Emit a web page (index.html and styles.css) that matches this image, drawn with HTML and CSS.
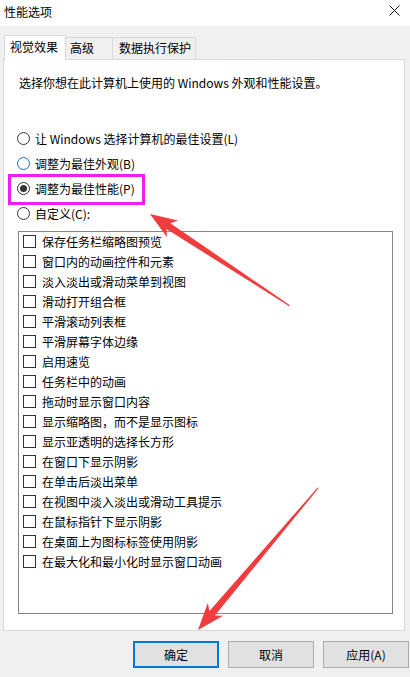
FILE: index.html
```html
<!DOCTYPE html>
<html lang="zh-CN">
<head>
  <meta charset="UTF-8" />
  <meta name="viewport" content="width=device-width, initial-scale=1.0" />
  <title>性能选项</title>
  <link rel="stylesheet" href="styles.css">
</head>
<body>
  <div class="dialog">
    <div class="titlebar">
      <span class="title">性能选项</span>
      <svg class="close" width="11" height="11" viewBox="0 0 11 11">
        <path d="M0.5 0.5 L10.5 10.5 M10.5 0.5 L0.5 10.5" stroke="#111" stroke-width="1" fill="none" />
      </svg>
    </div>

    <div class="tabs">
      <div class="tab active">视觉效果</div>
      <div class="tab tab-adv">高级</div>
      <div class="tab tab-dep">数据执行保护</div>
    </div>

    <div class="panel">
      <p class="desc">选择你想在此计算机上使用的 Windows 外观和性能设置。</p>

      <div class="radios">
        <div class="radio"><span class="circle"></span>让 Windows 选择计算机的最佳设置(L)</div>
        <div class="radio"><span class="circle focus"></span>调整为最佳外观(B)</div>
        <div class="radio"><span class="circle checked"></span>调整为最佳性能(P)</div>
        <div class="radio"><span class="circle"></span>自定义(C):</div>
      </div>

      <div class="listbox">
        <div class="item"><span class="box"></span>保存任务栏缩略图预览</div>
        <div class="item"><span class="box"></span>窗口内的动画控件和元素</div>
        <div class="item"><span class="box"></span>淡入淡出或滑动菜单到视图</div>
        <div class="item"><span class="box"></span>滑动打开组合框</div>
        <div class="item"><span class="box"></span>平滑滚动列表框</div>
        <div class="item"><span class="box"></span>平滑屏幕字体边缘</div>
        <div class="item"><span class="box"></span>启用速览</div>
        <div class="item"><span class="box"></span>任务栏中的动画</div>
        <div class="item"><span class="box"></span>拖动时显示窗口内容</div>
        <div class="item"><span class="box"></span>显示缩略图，而不是显示图标</div>
        <div class="item"><span class="box"></span>显示亚透明的选择长方形</div>
        <div class="item"><span class="box"></span>在窗口下显示阴影</div>
        <div class="item"><span class="box"></span>在单击后淡出菜单</div>
        <div class="item"><span class="box"></span>在视图中淡入淡出或滑动工具提示</div>
        <div class="item"><span class="box"></span>在鼠标指针下显示阴影</div>
        <div class="item"><span class="box"></span>在桌面上为图标标签使用阴影</div>
        <div class="item"><span class="box"></span>在最大化和最小化时显示窗口动画</div>
      </div>
    </div>

    <div class="buttons">
      <button class="btn default">确定</button>
      <button class="btn">取消</button>
      <button class="btn">应用(A)</button>
    </div>

    <!-- tutorial markup drawn over the dialog -->
    <svg class="overlay" width="410" height="677" viewBox="0 0 410 677">
      <rect x="9.5" y="175.5" width="134" height="28" fill="none" stroke="#f01ef0" stroke-width="3" />
      <g transform="translate(150,214) rotate(33.3)">
        <path d="M0 0 L27 -10 L22 -3.5 L167 -0.6 L167 0.6 L22 3.5 L27 10 Z" fill="#f03c3c" />
      </g>
      <g transform="translate(198,630) rotate(-49.8)">
        <path d="M0 0 L27 -10 L22 -3.5 L186 -0.6 L186 0.6 L22 3.5 L27 10 Z" fill="#f03c3c" />
      </g>
    </svg>
  </div>
</body>
</html>
```

FILE: styles.css
```css
body {
  margin: 0;
  background: #f0f0f0;
  font-family: "Noto Sans CJK SC", "Noto Sans", sans-serif;
  font-size: 12px;
  color: #000;
}
.dialog {
  position: relative;
  width: 410px;
  height: 677px;
  overflow: hidden;
}
.titlebar {
  height: 26px;
  background: #fff;
  display: flex;
  align-items: center;
  justify-content: space-between;
  padding: 0 10px 0 4px;
  box-sizing: border-box;
}
.title {
  line-height: 23px;
  margin-top: -3px;
}
.close {
  display: block;
  margin-top: -6px;
}
.tabs {
  display: flex;
  align-items: flex-end;
  height: 24px;
  margin-top: 9px;
  padding-left: 4px;
}
.tab {
  box-sizing: border-box;
  height: 22px;
  line-height: 20px;
  border: 1px solid #d9d9d9;
  border-bottom: none;
  background: #f0f0f0;
  margin-left: -1px;
  white-space: nowrap;
}
.tab.active {
  position: relative;
  z-index: 1;
  width: 62px;
  height: 25px;
  line-height: 22px;
  margin-left: 0;
  margin-bottom: -1px;
  padding-left: 5px;
  background: #fff;
}
.tab-adv {
  width: 47px;
  padding-left: 4px;
  border-left: none;
  margin-left: 0;
}
.tab-dep {
  width: 84px;
  padding-left: 6px;
}
.panel {
  box-sizing: border-box;
  height: 572px;
  margin: 0 5px 0 3px;
  background: #fff;
  border: 1px solid #d9d9d9;
}
.desc {
  margin: 15px 0 0 15px;
  line-height: 16px;
}
.radios {
  margin-top: 35px;
}
.radio {
  display: flex;
  align-items: center;
  height: 25px;
  padding-left: 13px;
  white-space: nowrap;
}
.circle {
  box-sizing: border-box;
  width: 13px;
  height: 13px;
  border: 1px solid #333;
  border-radius: 50%;
  margin-right: 5px;
  position: relative;
}
.circle.focus {
  border-color: #1a6fc4;
}
.circle.checked::after {
  content: "";
  position: absolute;
  left: 2px;
  top: 2px;
  width: 7px;
  height: 7px;
  border-radius: 50%;
  background: #333;
}
.listbox {
  box-sizing: border-box;
  width: 375px;
  height: 383px;
  margin: 5px 0 0 14px;
  border: 1px solid #828790;
  padding: 0 0 0 4px;
}
.item {
  display: flex;
  align-items: center;
  height: 20px;
  white-space: nowrap;
}
.item:first-child {
  margin-top: -1px;
}
.box {
  box-sizing: border-box;
  width: 13px;
  height: 13px;
  border: 1px solid #333;
  margin-right: 6px;
}
.buttons {
  display: flex;
  justify-content: flex-end;
  gap: 9px;
  margin-top: 10px;
  padding-right: 1px;
}
.btn {
  box-sizing: border-box;
  width: 86px;
  height: 27px;
  padding: 0;
  background: #e1e1e1;
  border: 1px solid #adadad;
  border-radius: 0;
  font-family: inherit;
  font-size: 12px;
  color: #000;
}
.btn.default {
  border: 2px solid #0078d7;
}
.overlay {
  position: absolute;
  left: 0;
  top: 0;
  pointer-events: none;
}
```
